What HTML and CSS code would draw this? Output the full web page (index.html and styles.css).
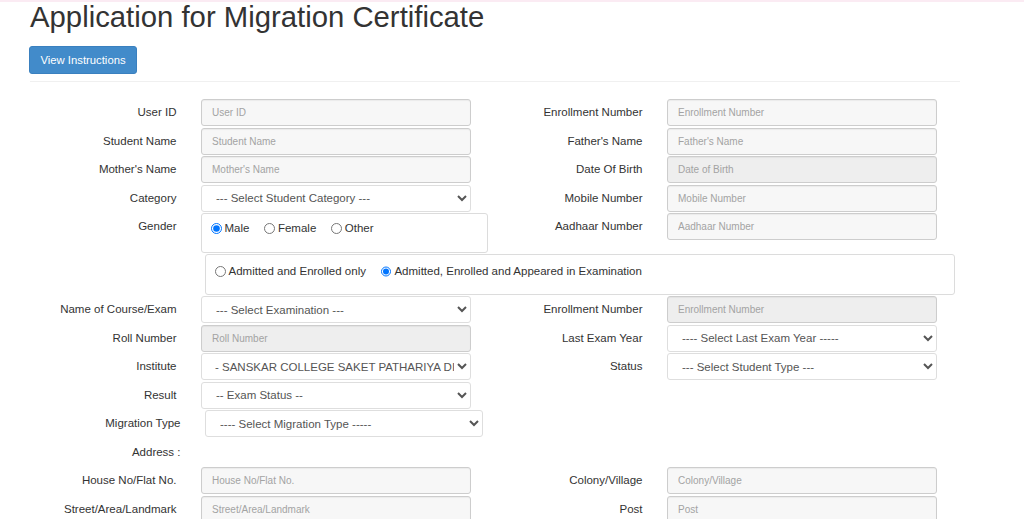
FILE: index.html
```html
<!DOCTYPE html>
<html lang="en">
<head>
    <meta charset="UTF-8">
    <meta name="viewport" content="width=device-width, initial-scale=1.0">
    <title>Application for Migration Certificate</title>
    <link rel="stylesheet" href="styles.css">
</head>
<body>
    <div class="container">
        <h1>Application for Migration Certificate</h1>
        <button class="btn-primary">View Instructions</button>
        <hr>

        <form class="form">
            <div class="row">
                <div class="field">
                    <label>User ID</label>
                    <input type="text" placeholder="User ID">
                </div>
                <div class="field">
                    <label>Enrollment Number</label>
                    <input type="text" placeholder="Enrollment Number">
                </div>
            </div>
            <div class="row">
                <div class="field">
                    <label>Student Name</label>
                    <input type="text" placeholder="Student Name">
                </div>
                <div class="field">
                    <label>Father's Name</label>
                    <input type="text" placeholder="Father's Name">
                </div>
            </div>
            <div class="row">
                <div class="field">
                    <label>Mother's Name</label>
                    <input type="text" placeholder="Mother's Name">
                </div>
                <div class="field">
                    <label>Date Of Birth</label>
                    <input type="text" class="readonly" placeholder="Date of Birth" readonly>
                </div>
            </div>
            <div class="row">
                <div class="field">
                    <label>Category</label>
                    <select>
                        <option>--- Select Student Category ---</option>
                    </select>
                </div>
                <div class="field">
                    <label>Mobile Number</label>
                    <input type="text" placeholder="Mobile Number">
                </div>
            </div>
            <div class="row row-gender">
                <div class="field">
                    <label>Gender</label>
                    <div class="radio-box gender-box">
                        <label class="radio"><input type="radio" name="gender" checked> Male</label>
                        <label class="radio"><input type="radio" name="gender"> Female</label>
                        <label class="radio"><input type="radio" name="gender"> Other</label>
                    </div>
                </div>
                <div class="field">
                    <label>Aadhaar Number</label>
                    <input type="text" placeholder="Aadhaar Number">
                </div>
            </div>

            <!-- admission type sits under the gender box, no label -->
            <div class="radio-box admit-box">
                <label class="radio"><input type="radio" name="admit">Admitted and Enrolled only</label>
                <label class="radio"><input type="radio" name="admit" checked> Admitted, Enrolled and Appeared in Examination</label>
            </div>

            <div class="row">
                <div class="field">
                    <label>Name of Course/Exam</label>
                    <select>
                        <option>--- Select Examination ---</option>
                    </select>
                </div>
                <div class="field">
                    <label>Enrollment Number</label>
                    <input type="text" class="readonly" placeholder="Enrollment Number" readonly>
                </div>
            </div>
            <div class="row">
                <div class="field">
                    <label>Roll Number</label>
                    <input type="text" class="readonly" placeholder="Roll Number" readonly>
                </div>
                <div class="field">
                    <label>Last Exam Year</label>
                    <select>
                        <option>---- Select Last Exam Year -----</option>
                    </select>
                </div>
            </div>
            <div class="row">
                <div class="field">
                    <label>Institute</label>
                    <select class="narrow-pad">
                        <option>- SANSKAR COLLEGE SAKET PATHARIYA DISTRICT DAMOH</option>
                    </select>
                </div>
                <div class="field">
                    <label>Status</label>
                    <select>
                        <option>--- Select Student Type ---</option>
                    </select>
                </div>
            </div>
            <div class="row">
                <div class="field">
                    <label>Result</label>
                    <select>
                        <option>-- Exam Status --</option>
                    </select>
                </div>
            </div>
            <div class="row">
                <div class="field field-wide">
                    <label>Migration Type</label>
                    <select>
                        <option>---- Select Migration Type -----</option>
                    </select>
                </div>
            </div>
            <div class="row">
                <div class="field field-wide">
                    <label>Address :</label>
                </div>
            </div>
            <div class="row">
                <div class="field">
                    <label>House No/Flat No.</label>
                    <input type="text" placeholder="House No/Flat No.">
                </div>
                <div class="field">
                    <label>Colony/Village</label>
                    <input type="text" placeholder="Colony/Village">
                </div>
            </div>
            <div class="row">
                <div class="field">
                    <label>Street/Area/Landmark</label>
                    <input type="text" placeholder="Street/Area/Landmark">
                </div>
                <div class="field">
                    <label>Post</label>
                    <input type="text" placeholder="Post">
                </div>
            </div>
        </form>
    </div>
</body>
</html>
```

FILE: styles.css
```css
body {
    margin: 0;
    border-top: 2px solid #fbebf3;
    background-color: #fff;
    color: #333;
    font-family: "Liberation Sans", Arial, sans-serif;
    font-size: 11.5px;
}

.container {
    width: 930px;
    padding-left: 30px;
}

h1 {
    margin: 0;
    font-size: 29.3px;
    font-weight: normal;
    line-height: 30px;
    color: #333;
}

.btn-primary {
    display: block;
    margin: 14px 0 0 -1px;
    width: 108px;
    height: 28px;
    padding: 0;
    background-color: #428bca;
    border: 1px solid #3a80bf;
    border-radius: 3px;
    color: #fff;
    font-family: inherit;
    font-size: 11.3px;
    cursor: pointer;
}

hr {
    margin: 7px 0 17px;
    border: none;
    border-top: 1px solid #f0f0f0;
}

.row {
    display: grid;
    grid-template-columns: 441px 441px;
    column-gap: 25px;
    margin-bottom: 1.5px;
}

.field {
    display: flex;
    align-items: flex-start;
    gap: 24.5px;
}

.field > label {
    flex: 0 0 146.5px;
    text-align: right;
    line-height: 27px;
    white-space: nowrap;
}

.field-wide > label {
    flex-basis: 150.5px;
}

input[type="text"], select {
    flex: 0 0 270px;
    box-sizing: border-box;
    width: 270px;
    height: 27px;
    margin: 0;
    border-radius: 3px;
    font-family: inherit;
    outline: none;
}

input[type="text"] {
    padding: 0 10px;
    background-color: #f7f7f7;
    border: 1px solid #cdcdcd;
    box-shadow: inset 0 1px 1px rgba(0, 0, 0, 0.05);
    font-size: 10px;
    color: #555;
}

input::placeholder {
    color: #a3a3a3;
}

input.readonly {
    background-color: #eeeeee;
}

select {
    padding: 0 4px 0 10px;
    background-color: #fff;
    border: 1px solid #dedede;
    font-size: 11.5px;
    color: #555;
}

select.narrow-pad {
    padding-left: 9px;
    padding-right: 0;
}

.field-wide select {
    flex-basis: 278px;
    width: 278px;
}

.radio-box {
    box-sizing: border-box;
    background-color: #fff;
    border: 1px solid #dcdcdc;
    border-radius: 3px;
    display: flex;
    align-items: center;
}

.gender-box {
    flex: 0 0 287px;
    height: 40px;
    padding: 7px 9px 0;
    align-items: flex-start;
    gap: 15px;
}

.row-gender {
    margin-bottom: 1px;
}

.admit-box {
    width: 750px;
    height: 41px;
    margin: 0 0 1px 175px;
    padding: 9px 9px 0;
    align-items: flex-start;
    gap: 15px;
}

.radio {
    display: flex;
    align-items: center;
    line-height: 15px;
    white-space: nowrap;
}

.radio input {
    width: 10.5px;
    height: 10.5px;
    margin: 0 3px 0 0;
}
```
